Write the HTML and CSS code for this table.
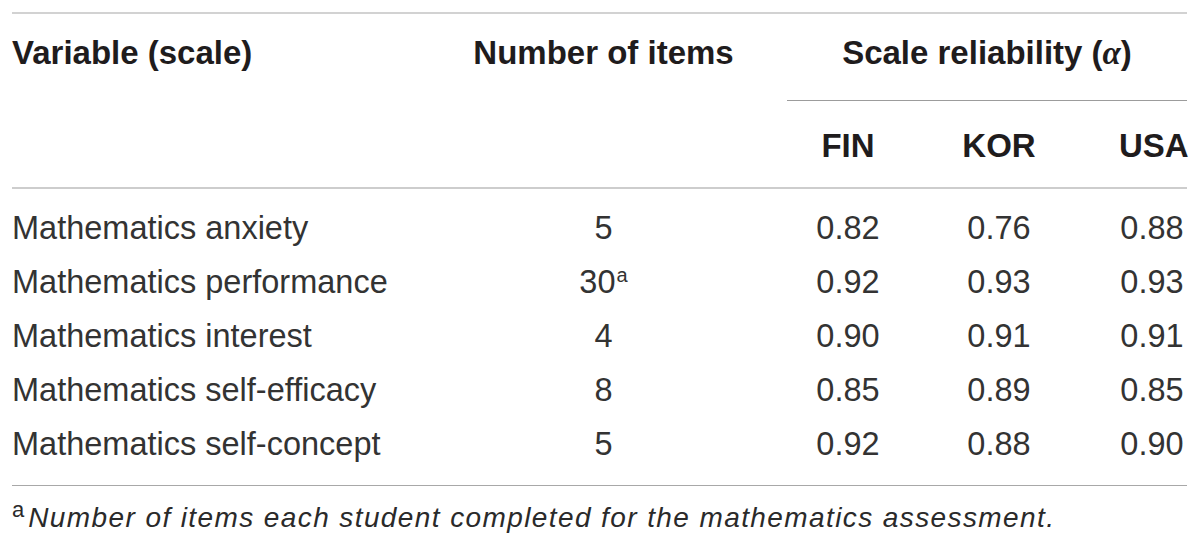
FILE: index.html
```html
<!DOCTYPE html>
<html lang="en">
<head>
<meta charset="utf-8">
<title>Scale reliability</title>
<link rel="stylesheet" href="styles.css">
</head>
<body>
<div class="wrap">
  <table class="tbl">
    <colgroup>
      <col class="c-var">
      <col class="c-num">
      <col class="c-fin">
      <col class="c-kor">
      <col class="c-usa">
    </colgroup>
    <thead>
      <tr>
        <th class="h-var" rowspan="2">Variable (scale)</th>
        <th class="h-num" rowspan="2">Number of items</th>
        <th class="h-group" colspan="3">Scale reliability (<span class="alpha">α</span>)</th>
      </tr>
      <tr>
        <th class="h-sub">FIN</th>
        <th class="h-sub">KOR</th>
        <th class="h-sub h-last">USA</th>
      </tr>
    </thead>
    <tbody>
      <tr class="first">
        <td class="name">Mathematics anxiety</td>
        <td class="val">5</td>
        <td class="val">0.82</td>
        <td class="val">0.76</td>
        <td class="val last">0.88</td>
      </tr>
      <tr>
        <td class="name">Mathematics performance</td>
        <td class="val">30<sup class="mark">a</sup></td>
        <td class="val">0.92</td>
        <td class="val">0.93</td>
        <td class="val last">0.93</td>
      </tr>
      <tr>
        <td class="name">Mathematics interest</td>
        <td class="val">4</td>
        <td class="val">0.90</td>
        <td class="val">0.91</td>
        <td class="val last">0.91</td>
      </tr>
      <tr>
        <td class="name">Mathematics self-efficacy</td>
        <td class="val">8</td>
        <td class="val">0.85</td>
        <td class="val">0.89</td>
        <td class="val last">0.85</td>
      </tr>
      <tr class="final">
        <td class="name">Mathematics self-concept</td>
        <td class="val">5</td>
        <td class="val">0.92</td>
        <td class="val">0.88</td>
        <td class="val last">0.90</td>
      </tr>
    </tbody>
  </table>
  <p class="note"><sup class="note-mark">a</sup><em>Number of items each student completed for the mathematics assessment.</em></p>
</div>
</body>
</html>
```

FILE: styles.css
```css
html, body {
  margin: 0;
  padding: 0;
  background: #ffffff;
}

body {
  font-family: "Liberation Sans", Arial, Helvetica, sans-serif;
  color: #2e2e2e;
}

.wrap {
  width: 1175px;
  padding: 12px 13px 0 12px;
}

.tbl {
  width: 1175px;
  table-layout: fixed;
  border-collapse: separate;
  border-spacing: 0;
  font-size: 32.5px;
}

.c-var { width: 408px; }
.c-num { width: 367px; }
.c-fin { width: 122px; }
.c-kor { width: 180px; }
.c-usa { width: 98px; }

.tbl th {
  font-size: 33px;
  font-weight: 700;
  color: #1f1c1d;
  line-height: 36px;
  padding: 0;
  white-space: nowrap;
}

.tbl .h-var,
.tbl .h-num {
  vertical-align: top;
  border-top: 2px solid #d2d2d2;
  border-bottom: 2px solid #cdcdcd;
  padding-top: 21px;
}

.h-var { text-align: left; }
.h-num { text-align: center; }

.tbl .h-group {
  text-align: center;
  border-top: 2px solid #d2d2d2;
  border-bottom: 1px solid #9c9c9c;
  padding: 21px 0 29px 0;
}

.alpha {
  font-family: "Liberation Serif", "Times New Roman", serif;
  font-style: italic;
  font-weight: 700;
}

.tbl .h-sub {
  text-align: center;
  padding: 27px 0 23px 0;
  border-bottom: 2px solid #cdcdcd;
}

.tbl .h-sub.h-last {
  padding-left: 30px;
}

.tbl td {
  line-height: 54px;
  padding: 0;
  white-space: nowrap;
  font-weight: 400;
  color: #333333;
}

.name { text-align: left; }
.val { text-align: center; }

.tbl td.last { padding-left: 28px; }

.first td { padding-top: 12px; }
.final td {
  padding-bottom: 14px;
  border-bottom: 1px solid #a8a8a8;
}

.mark {
  font-size: 20px;
  line-height: 0;
  vertical-align: 11px;
  margin-left: 1px;
}

.note {
  margin: 14px 0 0 0;
  font-size: 28px;
  line-height: 36px;
  color: #2a2a2a;
  white-space: nowrap;
}

.note em {
  font-style: italic;
  letter-spacing: 1.4px;
  margin-left: 4px;
}

.note-mark {
  font-size: 22px;
  line-height: 0;
  vertical-align: 10px;
}
```
